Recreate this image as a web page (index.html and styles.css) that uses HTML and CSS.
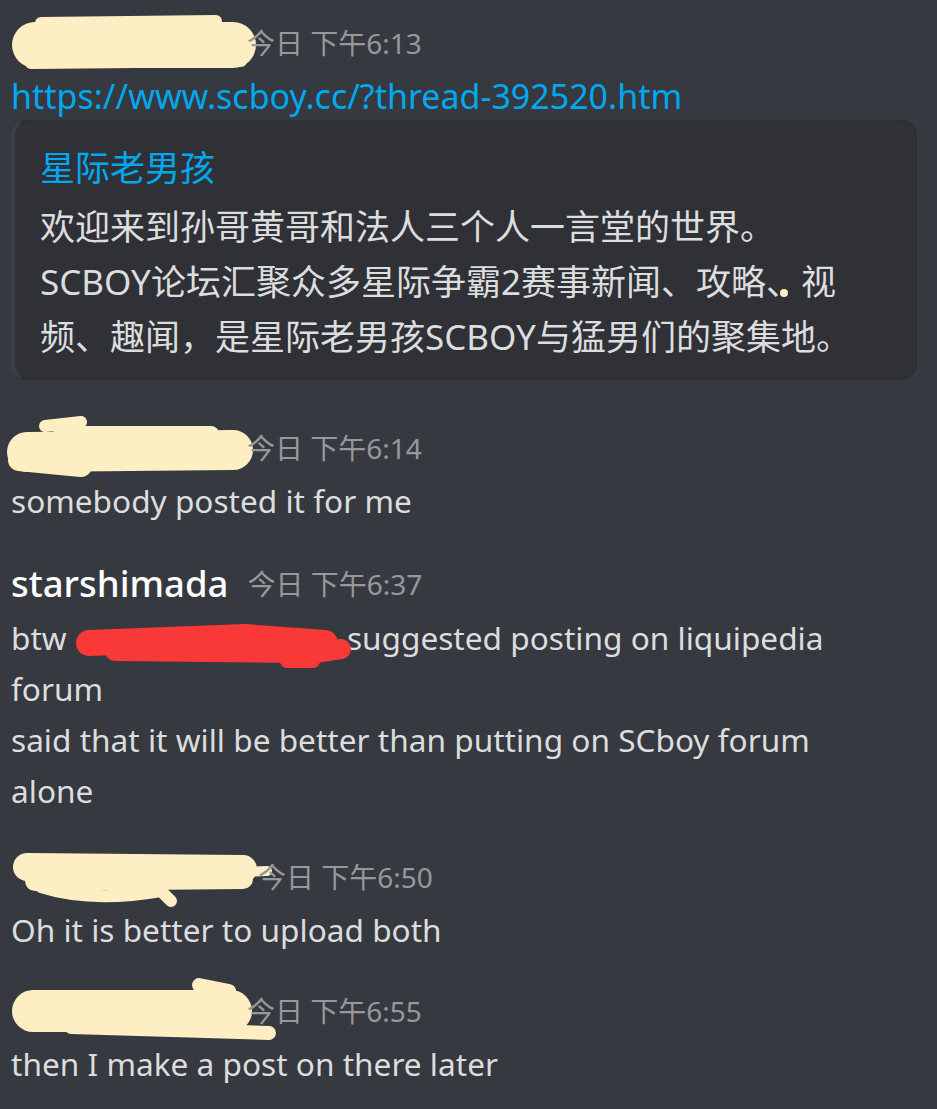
FILE: index.html
```html
<!DOCTYPE html>
<html lang="zh">
<head>
<meta charset="utf-8">
<title>Chat</title>
<link rel="stylesheet" href="styles.css">
</head>
<body>
<div class="chat">

  <div class="msg first">
    <div class="header">
      <svg class="blob" width="236" height="50" viewBox="0 0 236 50">
        <path d="M24 28 L222 28" stroke="#fdefc3" stroke-width="46" stroke-linecap="round" fill="none"/>
        <path d="M30 6 L205 4" stroke="#fdefc3" stroke-width="12" stroke-linecap="round" fill="none"/>
        <path d="M20 46 L230 44" stroke="#fdefc3" stroke-width="12" stroke-linecap="round" fill="none"/>
      </svg>
      <span class="time">今日 下午6:13</span>
    </div>
    <div class="text"><span class="link">https://www.scboy.cc/?thread-392520.htm</span></div>
    <div class="embed">
      <div class="embed-title">星际老男孩</div>
      <div class="embed-body">欢迎来到孙哥黄哥和法人三个人一言堂的世界。<br>SCBOY论坛汇聚众多星际争霸2赛事新闻、攻略、视<br>频、趣闻，是星际老男孩SCBOY与猛男们的聚集地。</div>
      <span class="dot"></span>
    </div>
  </div>

  <div class="msg after-embed">
    <div class="header">
      <svg class="blob" width="236" height="50" viewBox="0 0 236 50">
        <path d="M16 30 L222 28" stroke="#fdefc3" stroke-width="40" stroke-linecap="round" fill="none"/>
        <path d="M34 4 L70 0" stroke="#fdefc3" stroke-width="12" stroke-linecap="round" fill="none"/>
        <path d="M50 12 L200 12" stroke="#fdefc3" stroke-width="16" stroke-linecap="round" fill="none"/>
        <path d="M8 38 L70 44" stroke="#fdefc3" stroke-width="22" stroke-linecap="round" fill="none"/>
      </svg>
      <span class="time">今日 下午6:14</span>
    </div>
    <div class="text">somebody posted it for me</div>
  </div>

  <div class="msg">
    <div class="header">
      <span class="name">starshimada</span>
      <span class="time">今日 下午6:37</span>
    </div>
    <div class="text tall">
      <div class="line">btw <span class="redact"><svg class="scribble" width="272" height="50" viewBox="0 0 272 50">
        <path d="M14 24 L170 18 L250 24" stroke="#f93838" stroke-width="26" stroke-linecap="round" stroke-linejoin="round" fill="none"/>
        <path d="M40 32 L240 34 L266 30" stroke="#f93838" stroke-width="20" stroke-linecap="round" stroke-linejoin="round" fill="none"/>
        <path d="M212 42 L238 42" stroke="#f93838" stroke-width="14" stroke-linecap="round" fill="none"/>
      </svg></span>suggested posting on liquipedia</div>
      <div class="line">forum</div>
      <div class="line">said that it will be better than putting on SCboy forum</div>
      <div class="line">alone</div>
    </div>
  </div>

  <div class="msg spaced">
    <div class="header">
      <svg class="blob wide" width="247" height="50" viewBox="0 0 247 50">
        <path d="M16 16 L232 18" stroke="#fdefc3" stroke-width="28" stroke-linecap="round" fill="none"/>
        <path d="M24 30 L232 28" stroke="#fdefc3" stroke-width="20" stroke-linecap="round" fill="none"/>
        <path d="M30 36 Q80 52 150 40 L160 50" stroke="#fdefc3" stroke-width="12" stroke-linecap="round" fill="none"/>
        <path d="M200 22 L256 20" stroke="#fdefc3" stroke-width="10" stroke-linecap="round" fill="none"/>
      </svg>
      <span class="time">今日 下午6:50</span>
    </div>
    <div class="text">Oh it is better to upload both</div>
  </div>

  <div class="msg last">
    <div class="header">
      <svg class="blob" width="236" height="50" viewBox="0 0 236 50">
        <path d="M22 26 L220 26" stroke="#fdefc3" stroke-width="42" stroke-linecap="round" fill="none"/>
        <path d="M188 0 L218 6" stroke="#fdefc3" stroke-width="14" stroke-linecap="round" fill="none"/>
        <path d="M60 42 L258 48" stroke="#fdefc3" stroke-width="14" stroke-linecap="round" fill="none"/>
      </svg>
      <span class="time">今日 下午6:55</span>
    </div>
    <div class="text">then I make a post on there later</div>
  </div>

</div>
</body>
</html>
```

FILE: styles.css
```css
html, body {
  margin: 0;
  padding: 0;
  background: #36393f;
}

.chat {
  padding: 17px 70px 0 11px;
  font-family: "Noto Sans", "Noto Sans CJK SC", sans-serif;
  color: #dcddde;
}

.msg {
  margin-top: 32px;
}

.msg.first {
  margin-top: 0;
}

.msg.after-embed {
  margin-top: 42px;
}

.msg.spaced {
  margin-top: 35px;
}

.msg.last {
  margin-top: 30px;
}

.header {
  display: flex;
  align-items: center;
  height: 50px;
  margin-bottom: 4px;
}

.blob {
  display: block;
  flex: none;
  overflow: visible;
}

.name {
  font-size: 36.5px;
  color: #ffffff;
  font-weight: 500;
  margin-right: 19px;
}

.time {
  font-size: 28px;
  color: #96989d;
  white-space: nowrap;
}

.text {
  font-size: 31.6px;
  line-height: 50px;
}

.text.tall {
  line-height: 51px;
}

.line {
  white-space: nowrap;
}

.redact {
  display: inline-block;
  width: 272px;
  height: 30px;
  vertical-align: middle;
  position: relative;
}

.scribble {
  position: absolute;
  left: 0;
  top: -8px;
  overflow: visible;
}

.link {
  font-size: 34px;
  color: #00a8f0;
}

.embed {
  position: relative;
  margin-top: -2px;
  width: 906px;
  box-sizing: border-box;
  background: #2f3136;
  border: 1px solid #2b2d31;
  border-left: 4px solid #3d4046;
  border-radius: 16px;
  padding: 20px 20px 15px 25px;
}

.embed-title {
  font-size: 35px;
  line-height: 54px;
  color: #00a8f0;
}

.embed-body {
  margin-top: 4px;
  font-size: 35px;
  line-height: 55px;
  color: #dcddde;
}

.dot {
  position: absolute;
  left: 765px;
  top: 168px;
  width: 8px;
  height: 8px;
  border-radius: 50%;
  background: #fdefc3;
}
```
